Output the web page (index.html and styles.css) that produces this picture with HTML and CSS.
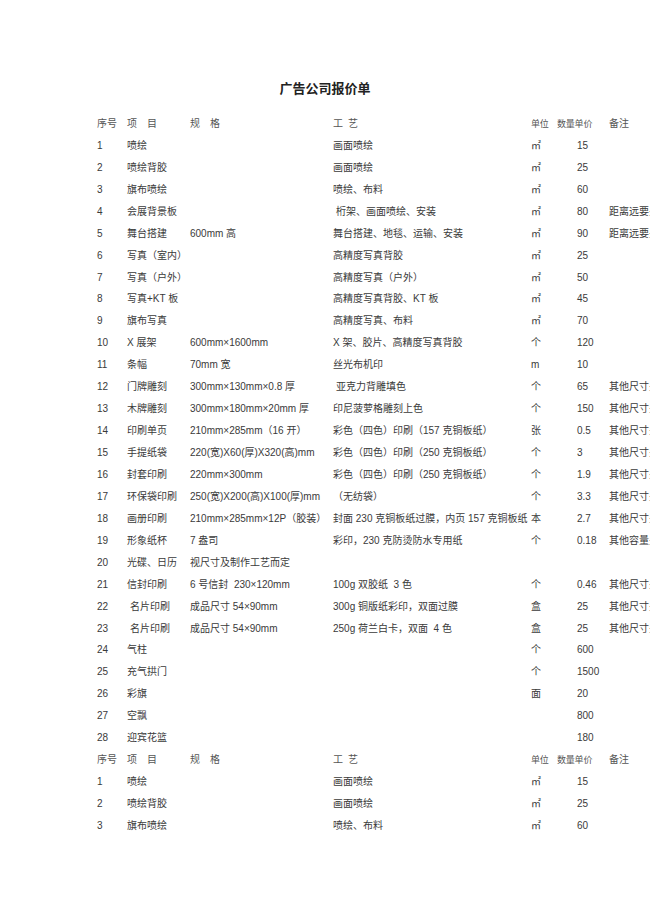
FILE: index.html
```html
<!DOCTYPE html>
<html lang="zh-CN">
<head>
<meta charset="utf-8">
<title>广告公司报价单</title>
<link rel="stylesheet" href="styles.css">
</head>
<body>
<div class="page">
  <h1 class="title">广告公司报价单</h1>
  <table class="quote">
    <colgroup>
      <col class="c-seq"><col class="c-item"><col class="c-spec"><col class="c-proc">
      <col class="c-unit"><col class="c-qty"><col class="c-price"><col class="c-note">
    </colgroup>
    <tbody>
      <tr class="head"><td>序号</td><td>项　目</td><td>规　格</td><td>工&ensp;艺</td><td class="sm">单位</td><td class="sm" colspan="2">数量单价</td><td>备注</td></tr>
      <tr><td>1</td><td>喷绘</td><td></td><td>画面喷绘</td><td>㎡</td><td></td><td>15</td><td></td></tr>
      <tr><td>2</td><td>喷绘背胶</td><td></td><td>画面喷绘</td><td>㎡</td><td></td><td>25</td><td></td></tr>
      <tr><td>3</td><td>旗布喷绘</td><td></td><td>喷绘、布料</td><td>㎡</td><td></td><td>60</td><td></td></tr>
      <tr><td>4</td><td>会展背景板</td><td></td><td class="ind">桁架、画面喷绘、安装</td><td>㎡</td><td></td><td>80</td><td>距离远要另计</td></tr>
      <tr><td>5</td><td>舞台搭建</td><td>600mm 高</td><td>舞台搭建、地毯、运输、安装</td><td>㎡</td><td></td><td>90</td><td>距离远要另计</td></tr>
      <tr><td>6</td><td>写真（室内）</td><td></td><td>高精度写真背胶</td><td>㎡</td><td></td><td>25</td><td></td></tr>
      <tr><td>7</td><td>写真（户外）</td><td></td><td>高精度写真（户外）</td><td>㎡</td><td></td><td>50</td><td></td></tr>
      <tr><td>8</td><td>写真+KT 板</td><td></td><td>高精度写真背胶、KT 板</td><td>㎡</td><td></td><td>45</td><td></td></tr>
      <tr><td>9</td><td>旗布写真</td><td></td><td>高精度写真、布料</td><td>㎡</td><td></td><td>70</td><td></td></tr>
      <tr><td>10</td><td>X 展架</td><td>600mm×1600mm</td><td>X 架、胶片、高精度写真背胶</td><td>个</td><td></td><td>120</td><td></td></tr>
      <tr><td>11</td><td>条幅</td><td>70mm 宽</td><td>丝光布机印</td><td>m</td><td></td><td>10</td><td></td></tr>
      <tr><td>12</td><td>门牌雕刻</td><td>300mm×130mm×0.8 厚</td><td class="ind">亚克力背雕填色</td><td>个</td><td></td><td>65</td><td>其他尺寸另议</td></tr>
      <tr><td>13</td><td>木牌雕刻</td><td>300mm×180mm×20mm 厚</td><td>印尼菠萝格雕刻上色</td><td>个</td><td></td><td>150</td><td>其他尺寸另议</td></tr>
      <tr><td>14</td><td>印刷单页</td><td>210mm×285mm（16 开）</td><td>彩色（四色）印刷（157 克铜板纸）</td><td>张</td><td></td><td>0.5</td><td>其他尺寸另议</td></tr>
      <tr><td>15</td><td>手提纸袋</td><td>220(宽)X60(厚)X320(高)mm</td><td>彩色（四色）印刷（250 克铜板纸）</td><td>个</td><td></td><td>3</td><td>其他尺寸另议</td></tr>
      <tr><td>16</td><td>封套印刷</td><td>220mm×300mm</td><td>彩色（四色）印刷（250 克铜板纸）</td><td>个</td><td></td><td>1.9</td><td>其他尺寸另议</td></tr>
      <tr><td>17</td><td>环保袋印刷</td><td>250(宽)X200(高)X100(厚)mm</td><td>（无纺袋）</td><td>个</td><td></td><td>3.3</td><td>其他尺寸另议</td></tr>
      <tr><td>18</td><td>画册印刷</td><td>210mm×285mm×12P（胶装）</td><td>封面 230 克铜板纸过膜，内页 157 克铜板纸</td><td>本</td><td></td><td>2.7</td><td>其他尺寸另议</td></tr>
      <tr><td>19</td><td>形象纸杯</td><td>7 盎司</td><td>彩印，230 克防烫防水专用纸</td><td>个</td><td></td><td>0.18</td><td>其他容量另议</td></tr>
      <tr><td>20</td><td>光碟、日历</td><td>视尺寸及制作工艺而定</td><td></td><td></td><td></td><td></td><td></td></tr>
      <tr><td>21</td><td>信封印刷</td><td>6 号信封  230×120mm</td><td>100g 双胶纸  3 色</td><td>个</td><td></td><td>0.46</td><td>其他尺寸另议</td></tr>
      <tr><td>22</td><td class="ind">名片印刷</td><td>成品尺寸 54×90mm</td><td>300g 铜版纸彩印，双面过膜</td><td>盒</td><td></td><td>25</td><td>其他尺寸另议</td></tr>
      <tr><td>23</td><td class="ind">名片印刷</td><td>成品尺寸 54×90mm</td><td>250g 荷兰白卡，双面  4 色</td><td>盒</td><td></td><td>25</td><td>其他尺寸另议</td></tr>
      <tr><td>24</td><td>气柱</td><td></td><td></td><td>个</td><td></td><td>600</td><td></td></tr>
      <tr><td>25</td><td>充气拱门</td><td></td><td></td><td>个</td><td></td><td>1500</td><td></td></tr>
      <tr><td>26</td><td>彩旗</td><td></td><td></td><td>面</td><td></td><td>20</td><td></td></tr>
      <tr><td>27</td><td>空飘</td><td></td><td></td><td></td><td></td><td>800</td><td></td></tr>
      <tr><td>28</td><td>迎宾花篮</td><td></td><td></td><td></td><td></td><td>180</td><td></td></tr>
      <tr class="head"><td>序号</td><td>项　目</td><td>规　格</td><td>工&ensp;艺</td><td class="sm">单位</td><td class="sm" colspan="2">数量单价</td><td>备注</td></tr>
      <tr><td>1</td><td>喷绘</td><td></td><td>画面喷绘</td><td>㎡</td><td></td><td>15</td><td></td></tr>
      <tr><td>2</td><td>喷绘背胶</td><td></td><td>画面喷绘</td><td>㎡</td><td></td><td>25</td><td></td></tr>
      <tr><td>3</td><td>旗布喷绘</td><td></td><td>喷绘、布料</td><td>㎡</td><td></td><td>60</td><td></td></tr>
    </tbody>
  </table>
</div>
</body>
</html>
```

FILE: styles.css
```css
html, body {
  margin: 0;
  padding: 0;
  background: #ffffff;
  overflow: hidden;
}

.page {
  width: 650px;
  height: 920px;
  overflow: hidden;
  padding-top: 79px;
  box-sizing: border-box;
  font-family: "Liberation Sans", "Noto Sans CJK SC", sans-serif;
  color: #3a3a3a;
}

.title {
  margin: 0;
  height: 17px;
  line-height: 17px;
  text-align: center;
  font-family: "Noto Sans CJK SC", sans-serif;
  font-size: 13px;
  font-weight: 700;
  color: #222222;
}

.quote {
  margin: 17px 0 0 97px;
  border-collapse: collapse;
  table-layout: fixed;
  width: 720px;
  font-size: 10px;
}

.c-seq { width: 30px; }
.c-item { width: 63px; }
.c-spec { width: 143px; }
.c-proc { width: 198px; }
.c-unit { width: 26px; }
.c-qty { width: 20px; }
.c-price { width: 32px; }
.c-note { width: 208px; }

.quote td {
  padding: 0;
  height: 21.94px;
  line-height: 12px;
  white-space: pre;
  vertical-align: middle;
  overflow: visible;
}

.quote .ind {
  padding-left: 3px;
}

.quote .head td {
  color: #555555;
}

.quote .head .sm {
  font-size: 9px;
  letter-spacing: -0.2px;
}
```
